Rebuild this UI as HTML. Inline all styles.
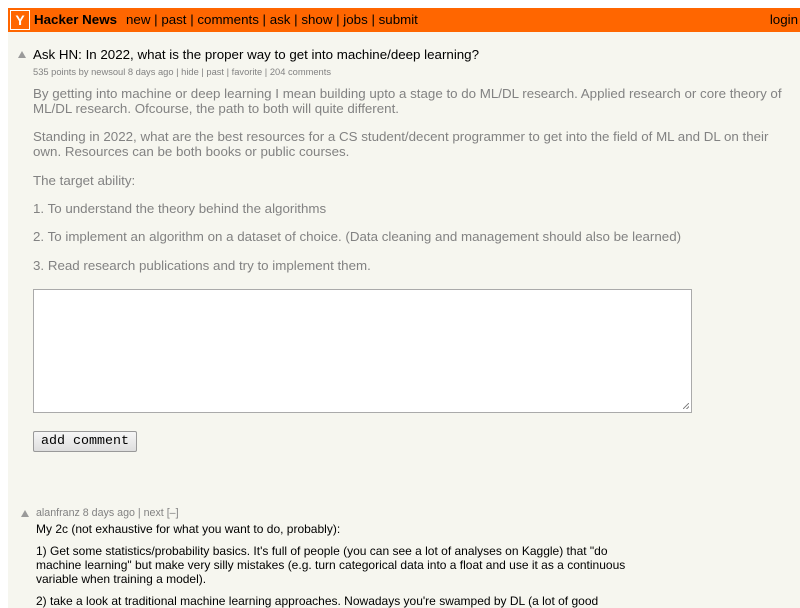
<!DOCTYPE html>
<html><head><style>
body{margin:0;background:#fff;font-family:"Liberation Sans",Arial,sans-serif;width:800px;height:600px;overflow:hidden;position:relative}
.main{position:absolute;left:8px;top:8px;width:792px;height:600px;background:#f6f6ef}
.bar{position:absolute;left:8px;top:8px;width:792px;height:24px;background:#ff6600;font-size:13.33px;color:#000}
.logo{position:absolute;left:2px;top:2px;width:18px;height:18px;border:1px solid #fff;color:#fff;font-weight:bold;font-size:14px;text-align:center;line-height:19px}
.a{position:absolute;white-space:nowrap}
.tri{position:absolute;width:0;height:0;border-left:4px solid transparent;border-right:4px solid transparent;border-bottom:7px solid #9a9a9a}
.g{color:#828282}
p{margin:0}
</style></head><body>
<div class="main"></div>
<div class="bar">
<div class="logo">Y</div>
<div class="a" style="left:26px;top:4px"><b>Hacker News</b></div>
<div class="a" style="left:118px;top:4px">new | past | comments | ask | show | jobs | submit</div>
<div class="a" style="right:2px;top:4px">login</div>
</div>
<div class="tri" style="left:18px;top:51px"></div>
<div class="a" style="left:33px;top:47px;font-size:13.33px;color:#000">Ask HN: In 2022, what is the proper way to get into machine/deep learning?</div>
<div class="a g" style="left:33px;top:67px;font-size:9.33px">535 points by newsoul 8 days ago | hide | past | favorite | 204 comments</div>
<div class="a g" style="left:33px;top:86px;font-size:13.33px;line-height:15px;white-space:normal;width:760px">
<p>By getting into machine or deep learning I mean building upto a stage to do ML/DL research. Applied research or core theory of ML/DL research. Ofcourse, the path to both will quite different.</p>
<p style="margin-top:13px">Standing in 2022, what are the best resources for a CS student/decent programmer to get into the field of ML and DL on their own. Resources can be both books or public courses.</p>
<p style="margin-top:14px">The target ability:</p>
<p style="margin-top:13px">1. To understand the theory behind the algorithms</p>
<p style="margin-top:13px">2. To implement an algorithm on a dataset of choice. (Data cleaning and management should also be learned)</p>
<p style="margin-top:14px">3. Read research publications and try to implement them.</p>
</div>
<div class="a" style="left:33px;top:289px;width:657px;height:122px;border:1px solid #aaa;background:#fff"></div>
<div class="a" style="left:683px;top:403px;width:6px;height:6px;background:linear-gradient(135deg,transparent 45%,#888 45%,#888 55%,transparent 55%,transparent 75%,#888 75%,#888 85%,transparent 85%)"></div>
<div class="a" style="left:33px;top:431px;width:102px;height:19px;border:1px solid #999;border-radius:2px;background:linear-gradient(#f6f6f6,#dedede);font-family:'Liberation Mono',monospace;font-size:13.33px;line-height:20px;text-align:center">add comment</div>
<div class="tri" style="left:21px;top:510px"></div>
<div class="a g" style="left:36px;top:507px;font-size:10.67px">alanfranz 8 days ago | next [–]</div>
<div class="a" style="left:36px;top:522px;font-size:12px;line-height:14px;white-space:normal;width:600px;color:#000">
<p>My 2c (not exhaustive for what you want to do, probably):</p>
<p style="margin-top:8px">1) Get some statistics/probability basics. It's full of people (you can see a lot of analyses on Kaggle) that "do machine learning" but make very silly mistakes (e.g. turn categorical data into a float and use it as a continuous variable when training a model).</p>
<p style="margin-top:8px">2) take a look at traditional machine learning approaches. Nowadays you're swamped by DL (a lot of good</p>
</div>
</body></html>
